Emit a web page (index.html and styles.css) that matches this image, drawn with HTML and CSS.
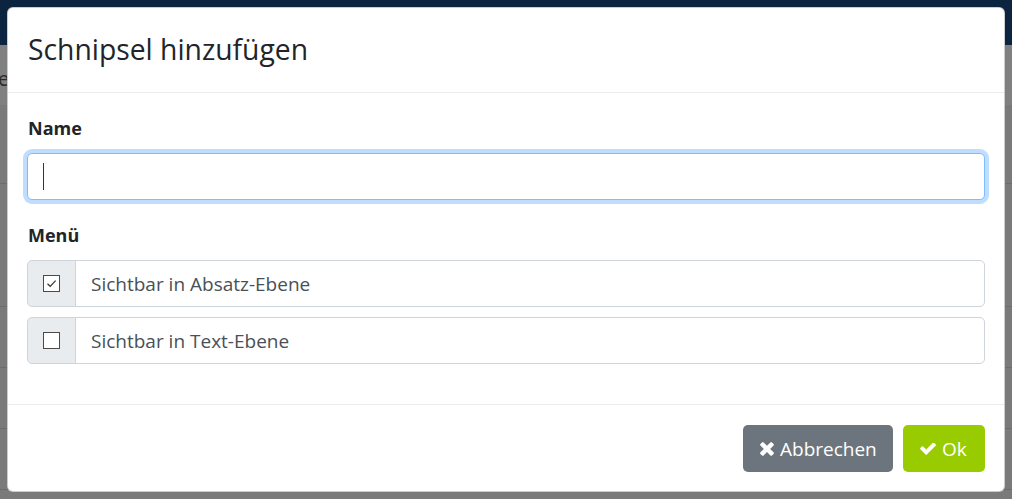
FILE: index.html
```html
<!DOCTYPE html>
<html lang="de">
<head>
<meta charset="utf-8">
<title>Schnipsel hinzufügen</title>
<link rel="stylesheet" href="styles.css">
</head>
<body>
<div class="page">
  <div class="navbar"></div>
  <div class="band"><span class="band-text">e</span></div>
  <div class="rows">
    <div class="row row-tall"></div>
    <div class="row"></div>
    <div class="row"></div>
    <div class="row"></div>
    <div class="row"></div>
  </div>
</div>

<div class="modal">
  <div class="modal-header">
    <h4 class="modal-title">Schnipsel hinzufügen</h4>
  </div>
  <div class="modal-body">
    <div class="form-group">
      <label class="label" for="name">Name</label>
      <div class="input-wrap">
        <input id="name" class="form-control is-focused" type="text" value="">
        <span class="caret"></span>
      </div>
    </div>
    <div class="form-group">
      <div class="label">Menü</div>
      <div class="input-group">
        <div class="prepend"><input class="check" type="checkbox" checked></div>
        <div class="group-text">Sichtbar in Absatz-Ebene</div>
      </div>
      <div class="input-group">
        <div class="prepend"><input class="check" type="checkbox"></div>
        <div class="group-text">Sichtbar in Text-Ebene</div>
      </div>
    </div>
  </div>
  <div class="modal-footer">
    <button class="btn btn-secondary" type="button">
      <svg class="icon icon-times" viewBox="100 360 1210 1210" aria-hidden="true"><path fill="currentColor" d="M1298 1322q0 40-28 68l-136 136q-28 28-68 28t-68-28l-294-294-294 294q-28 28-68 28t-68-28l-136-136q-28-28-28-68t28-68l294-294-294-294q-28-28-28-68t28-68l136-136q28-28 68-28t68 28l294 294 294-294q28-28 68-28t68 28l136 136q28 28 28 68t-28 68l-294 294 294 294q28 28 28 68z"/></svg>
      <span>Abbrechen</span>
    </button>
    <button class="btn btn-ok" type="button">
      <svg class="icon icon-check" viewBox="110 420 1570 1090" aria-hidden="true"><path fill="currentColor" d="M1671 566q0 40-28 68l-724 724-136 136q-28 28-68 28t-68-28l-136-136-362-362q-28-28-28-68t28-68l136-136q28-28 68-28t68 28l294 295 656-657q28-28 68-28t68 28l136 136q28 28 28 68z"/></svg>
      <span>Ok</span>
    </button>
  </div>
</div>
</body>
</html>
```

FILE: styles.css
```css
* { box-sizing: border-box; }

html, body {
  margin: 0;
  padding: 0;
}

body {
  width: 1012px;
  height: 499px;
  overflow: hidden;
  position: relative;
  font-family: "Open Sans", "Noto Sans", sans-serif;
  background: #7a7a7a;
}

/* background page (under the backdrop) */
.page {
  display: flex;
  flex-direction: column;
}
.navbar {
  height: 45px;
  background: #0b2440;
}
.band {
  height: 60px;
  background: #808080;
  display: flex;
  align-items: center;
  font-size: 20px;
  color: #2a2a2a;
}
.band-text {
  margin-left: -2px;
  margin-top: 6px;
}
.rows {
  display: flex;
  flex-direction: column;
}
.row {
  height: 61px;
  border-bottom: 1px solid #6c6c6c;
}
.row-tall {
  height: 79px;
}
.row:nth-child(2) { height: 123px; }

/* modal */
.modal {
  position: absolute;
  left: 7px;
  top: 7px;
  width: 998px;
  background: #fff;
  border: 1px solid rgba(0, 0, 0, 0.2);
  border-radius: 6px;
  color: #212529;
}

.modal-header {
  padding: 19px 19px 20px;
  border-bottom: 1px solid #e9ecef;
}
.modal-title {
  margin: 0;
  font-size: 28.3px;
  line-height: 45px;
  font-weight: 400;
  color: #212529;
  padding-left: 1px;
}

.modal-body {
  padding: 20px 19px 20px;
}

.form-group {
  margin-bottom: 20px;
}
.form-group:last-child {
  margin-bottom: 20px;
}

.label {
  display: block;
  font-size: 18px;
  font-weight: 700;
  line-height: 30px;
  margin-bottom: 10px;
  padding-left: 1px;
  color: #212529;
}

.input-wrap {
  position: relative;
}
.form-control {
  display: block;
  width: 100%;
  height: 47px;
  padding: 0 15px;
  font-family: inherit;
  font-size: 19px;
  color: #495057;
  background: #fff;
  border: 1px solid #ced4da;
  border-radius: 5px;
  outline: none;
  caret-color: transparent;
}
.form-control.is-focused {
  border-color: #80bdff;
  box-shadow: 0 0 0 4px rgba(0, 123, 255, 0.25);
}
.caret {
  position: absolute;
  left: 16px;
  top: 10px;
  width: 1px;
  height: 27px;
  background: #333;
}

.input-group {
  display: flex;
  height: 47px;
  margin-bottom: 10px;
}
.input-group:last-child {
  margin-bottom: 0;
}
.prepend {
  width: 49px;
  flex: none;
  display: flex;
  align-items: center;
  justify-content: center;
  background: #e9ecef;
  border: 1px solid #ced4da;
  border-radius: 5px 0 0 5px;
}
.group-text {
  flex: 1;
  display: flex;
  align-items: center;
  padding: 1px 15px 0;
  margin-left: -1px;
  font-size: 19px;
  color: #495057;
  border: 1px solid #ced4da;
  border-radius: 0 5px 5px 0;
  background: #fff;
}

.check {
  appearance: none;
  -webkit-appearance: none;
  margin: 0;
  width: 17px;
  height: 17px;
  border: 1px solid #4a4a4a;
  background: #fff center / 13px 13px no-repeat;
}
.check:checked {
  background-image: url("data:image/svg+xml,%3Csvg xmlns='http://www.w3.org/2000/svg' viewBox='0 0 13 13'%3E%3Cpath d='M2.5 6.8 L5.2 9.3 L10.6 3.6' fill='none' stroke='%23333' stroke-width='1.2'/%3E%3C/svg%3E");
}

.modal-footer {
  display: flex;
  justify-content: flex-end;
  gap: 10px;
  padding: 20px 19px 19px;
  border-top: 1px solid #e9ecef;
}

.btn {
  display: inline-flex;
  align-items: center;
  gap: 6px;
  height: 47px;
  padding: 1px 15px 0;
  font-family: inherit;
  font-size: 19px;
  color: #fff;
  border: none;
  border-radius: 5px;
}
.btn-secondary {
  background: #6c757d;
  width: 150px;
  padding-left: 17px;
}
.btn-ok {
  background: #99cc00;
  width: 82px;
  padding-left: 17px;
}
.icon {
  display: block;
  flex: none;
}
.icon-times {
  width: 14px;
  height: 14px;
}
.icon-check {
  width: 16px;
  height: 12px;
}
```
